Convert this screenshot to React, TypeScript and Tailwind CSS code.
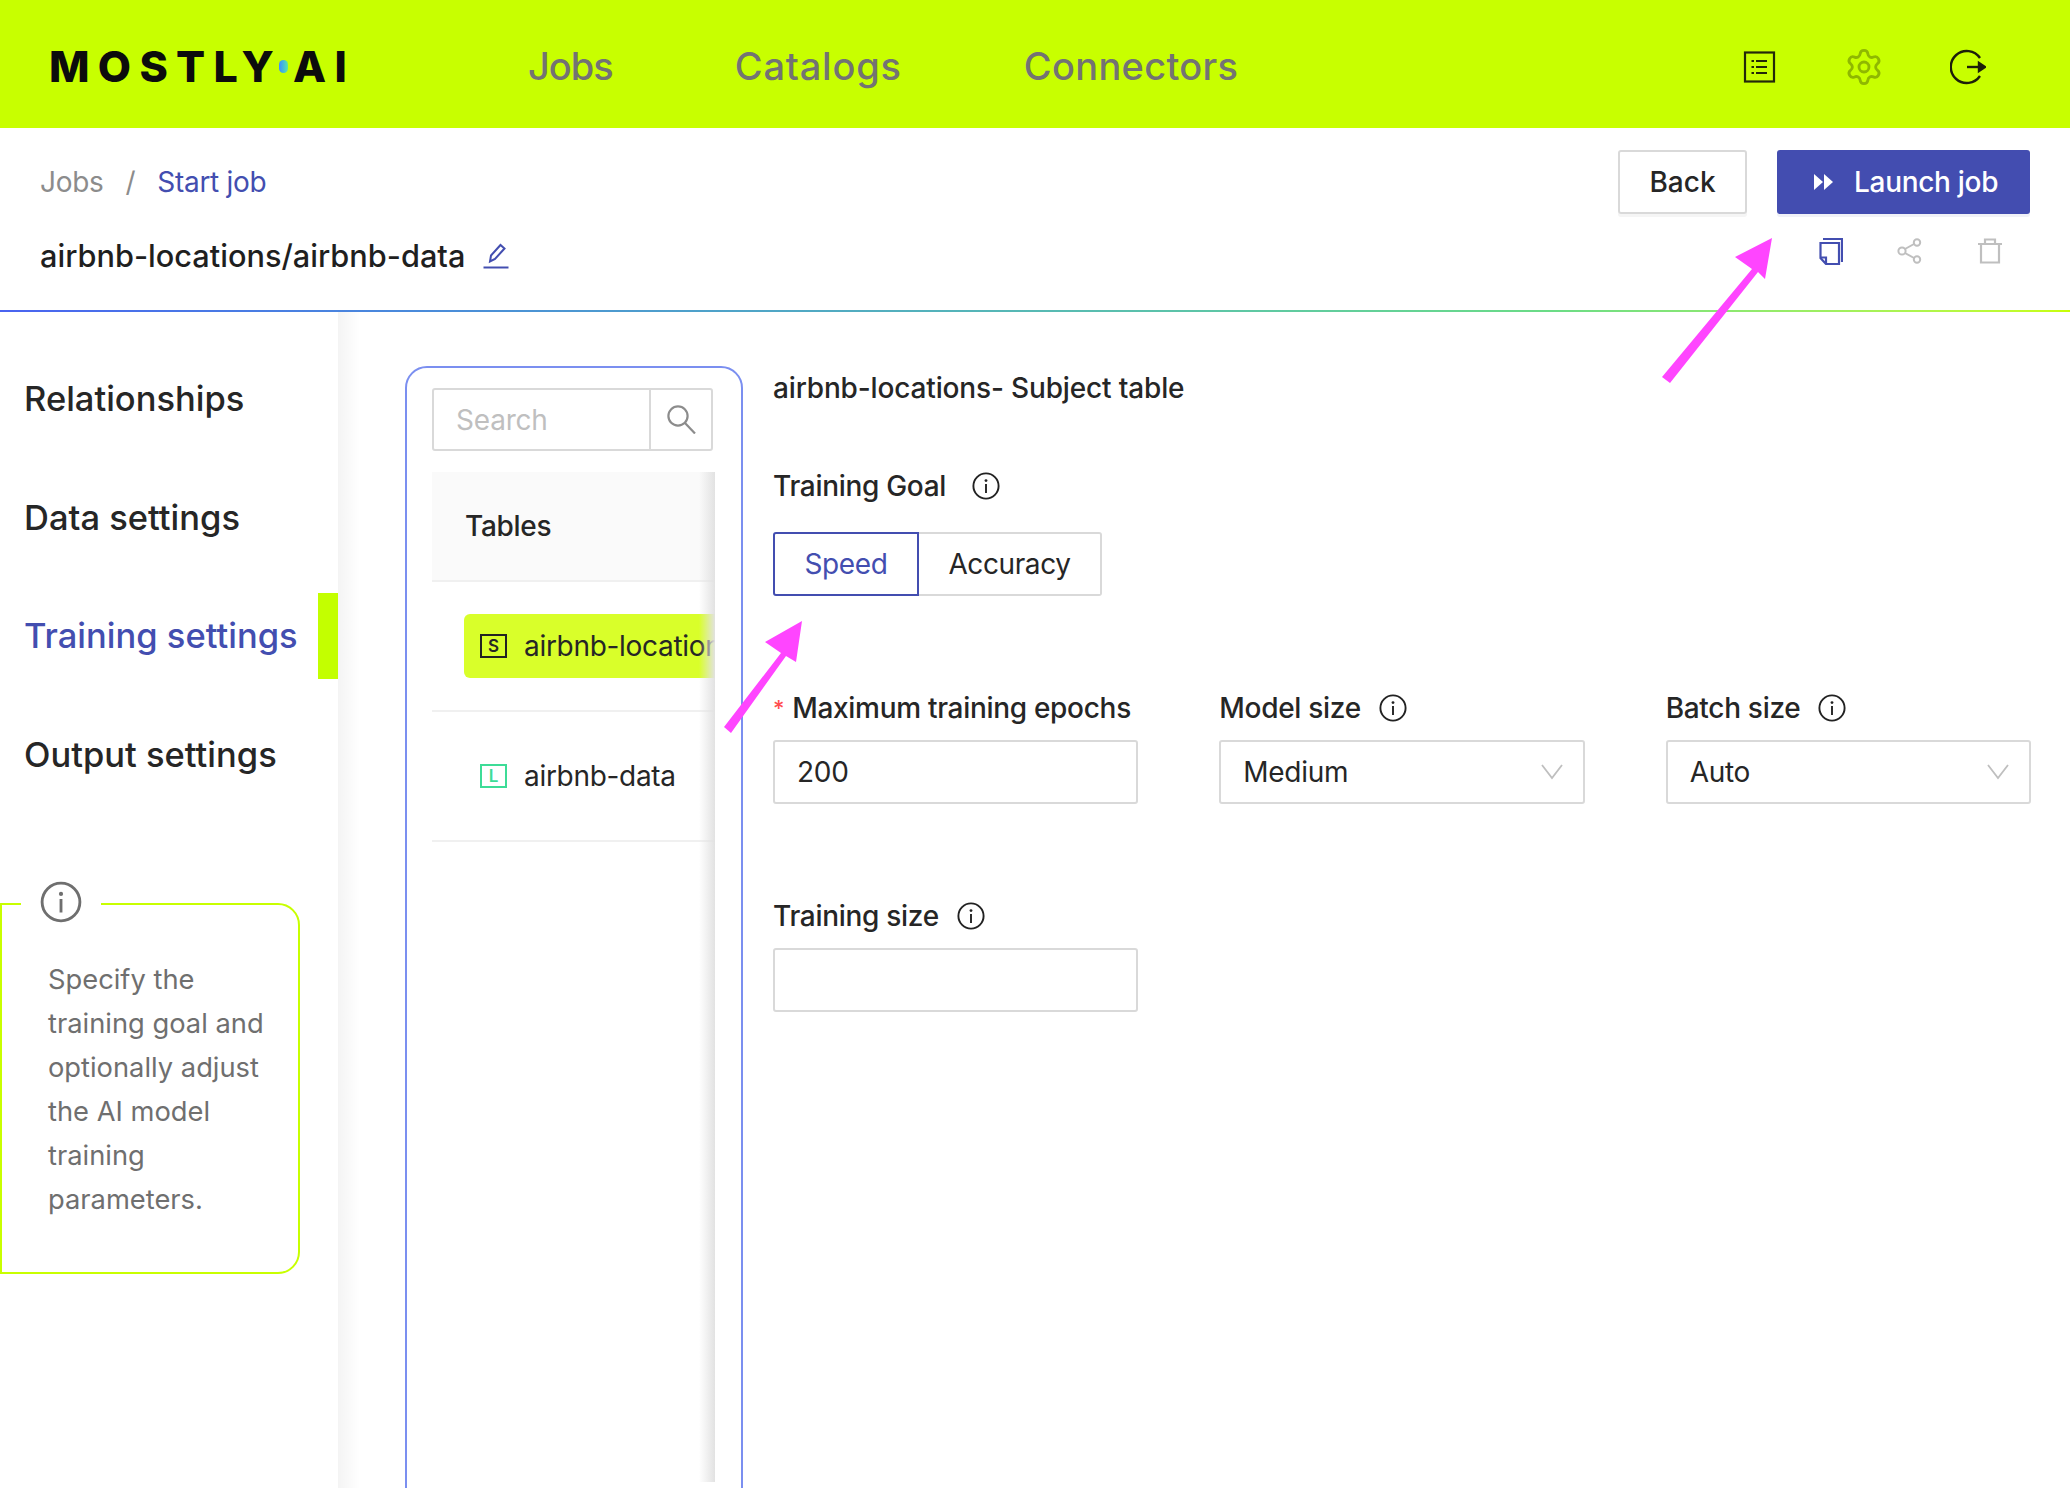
import React from "react";
import { Settings } from "lucide-react";

const font = "font-['Inter',sans-serif]";

const InfoIcon = ({ size = 28, color = "#222" }: { size?: number; color?: string }) => (
  <svg width={size} height={size} viewBox="0 0 28 28" fill="none">
    <circle cx="14" cy="14" r="12.6" stroke={color} strokeWidth="1.9" />
    <circle cx="14" cy="8.6" r="1.4" fill={color} />
    <path d="M14 12v9" stroke={color} strokeWidth="1.9" />
  </svg>
);

const Field = ({ label, required, info, children }: { label: string; required?: boolean; info?: boolean; children?: React.ReactNode }) => (
  <div className="flex flex-col gap-[10px]">
    <div className="flex h-[44px] items-center text-[28px] font-medium tracking-[-0.3px] text-[#262626]">
      {required && <span className="mr-[8px] text-[22px] text-[#ff4d4f]">*</span>}
      <span>{label}</span>
      {info && (
        <span className="ml-[18px]">
          <InfoIcon />
        </span>
      )}
    </div>
    {children}
  </div>
);

const Select = ({ value }: { value: string }) => (
  <div className="flex h-[64px] items-center justify-between rounded-[3px] border-2 border-[#d9d9d9] pl-[22px] pr-[20px] text-[28px] tracking-[-0.3px] text-[#262626]">
    <span>{value}</span>
    <svg width="22" height="16" viewBox="0 0 22 16" fill="none" stroke="#bfbfbf" strokeWidth="1.8">
      <path d="M1 1l10 13L21 1" />
    </svg>
  </div>
);

const navItems = [
  { name: "Jobs", cls: "tracking-[-1px]" },
  { name: "Catalogs", cls: "tracking-[0.8px]" },
  { name: "Connectors", cls: "tracking-[0.3px]" },
];

const sideItems = [
  { name: "Relationships" },
  { name: "Data settings" },
  { name: "Training settings", active: true },
  { name: "Output settings" },
];

export default function App() {
  return (
    <div className={`relative h-[1488px] w-[2070px] overflow-hidden bg-white ${font}`}>
      {/* top bar */}
      <header className="flex h-[128px] items-center bg-[#c8ff00] pl-[49px] pr-[84px] pt-[5px]">
        <div className="flex w-[479px] items-center text-[43px] font-extrabold leading-none tracking-[8.3px] text-[#0c0c0c]">
          <span>MOSTLY</span>
          <span className="ml-[-3px] mr-[5px] h-[13px] w-[9px] rounded-full bg-linear-to-r from-[#3f8cff] to-[#5fe3a0]" />
          <span>AI</span>
        </div>
        <nav className="flex gap-[122px] text-[38px] font-medium text-[#737373]">
          {navItems.map((n) => (
            <span key={n.name} className={n.cls}>
              {n.name}
            </span>
          ))}
        </nav>
        <div className="ml-auto flex items-center">
          <svg width="33" height="32" viewBox="0 0 32 32" fill="none" stroke="#23290a" strokeWidth="2.2">
            <rect x="1.5" y="1.5" width="29" height="29" />
            <path d="M12.5 10h11M12.5 16h11M12.5 22h11" />
            <path d="M8 10h2.5M8 16h2.5M8 22h2.5" />
          </svg>
          <Settings size={40} strokeWidth={1.7} color="#8fb800" className="ml-[68px]" />
          <svg className="ml-[66px]" width="36" height="36" viewBox="0 0 36 36" fill="none" stroke="#1d1f0a" strokeWidth="2.4">
            <path d="M30 9A16 16 0 1 0 30 27" />
            <path d="M17 18h16" />
            <path d="M29 14l6 4-6 4z" fill="#1d1f0a" />
          </svg>
        </div>
      </header>

      {/* breadcrumb and job title */}
      <section className="flex h-[182px] justify-between pl-[40px] pr-[40px]">
        <div>
          <div className="mt-[27px] flex h-[54px] items-center text-[28px] tracking-[-0.3px] text-[#8c8c8c]">
            <span>Jobs</span>
            <span className="mx-[22px]">/</span>
            <span className="text-[#434eb0]">Start job</span>
          </div>
          <div className="mt-[24px] flex items-center text-[30.7px] font-medium text-[#1f1f1f]">
            <span>airbnb-locations/airbnb-data</span>
            <svg className="ml-[18px]" width="26" height="26" viewBox="0 0 26 26" fill="none" stroke="#434eb0" strokeWidth="2">
              <path d="M7 18.5l1-6L17.5 2l4 3.5L12 16z" />
              <path d="M0.5 24.5h25" />
            </svg>
          </div>
        </div>
        <div className="flex flex-col items-end pt-[22px]">
          <div className="flex gap-[30px]">
            <button className="h-[64px] w-[129px] rounded-[3px] border-2 border-[#d9d9d9] text-[28px] font-medium text-[#262626] shadow-[0_3px_0_#f5f5f5]">
              Back
            </button>
            <button className="flex h-[64px] w-[253px] items-center rounded-[3px] bg-[#434db0] pl-[37px] text-[28px] font-medium tracking-[-0.3px] text-white shadow-[0_3px_0_#f0f1f8]">
              <svg width="19" height="16" viewBox="0 0 19 16" fill="white">
                <path d="M0 0l9 8-9 8zM10 0l9 8-9 8z" />
              </svg>
              <span className="ml-[21px]">Launch job</span>
            </button>
          </div>
          <div className="mt-[23px] flex items-center gap-[54px] pr-[27px]">
            <svg width="24" height="28" viewBox="0 0 24 28" fill="none" stroke="#434eb0" strokeWidth="2.2">
              <path d="M4 2h19v23" />
              <path d="M1.5 6H20v21H7l-5.5-6z" fill="white" />
              <path d="M1.5 20.5H7V27" />
            </svg>
            <svg width="26" height="26" viewBox="0 0 26 26" fill="none" stroke="#bfbfbf" strokeWidth="2">
              <circle cx="5" cy="13" r="3.6" />
              <circle cx="20" cy="4.5" r="3.2" />
              <circle cx="20" cy="21.5" r="3.2" />
              <path d="M8 11l9-5M8 15l9 5" />
            </svg>
            <svg width="26" height="26" viewBox="0 0 26 26" fill="none" stroke="#bfbfbf" strokeWidth="2.2">
              <path d="M1 6h24M8 6V1.5h10V6" />
              <path d="M4 6v18.5h18V6" />
            </svg>
          </div>
        </div>
      </section>

      <div className="h-[2px] bg-linear-to-r from-[#4a63f0] via-[#6bdc86] via-75% to-[#c8ff00]" />

      <main className="flex h-[1176px]">
        {/* left side menu */}
        <aside className="w-[338px] shrink-0 pt-[28px]">
          {sideItems.map((s) => (
            <div key={s.name} className="flex h-[118.5px] items-center pl-[24px]">
              <span className={`text-[34.5px] font-medium ${s.active ? "text-[#434eb0]" : "text-[#262626]"}`}>{s.name}</span>
              {s.active && <span className="ml-auto h-[86px] w-[20px] bg-[#c3ff00]" />}
            </div>
          ))}
          <div className="relative mt-[89px] h-[371px] w-[300px] rounded-r-[22px] border-2 border-[#c8ff00] pl-[46px] pr-[10px] pt-[53px] text-[27.3px] leading-[44px] text-[#6f6f6f]">
            <span className="absolute left-[19px] top-[-24px] flex w-[80px] justify-center bg-white">
              <InfoIcon size={42} color="#6f6f6f" />
            </span>
            Specify the training goal and optionally adjust the AI model training parameters.
          </div>
        </aside>
        <div className="h-full w-[22px] shrink-0 bg-linear-to-r from-[#f4f4f4] to-white" />

        {/* table list */}
        <div className="ml-[45px] mt-[54px] h-[1140px] w-[338px] shrink-0 rounded-t-[22px] border-2 border-[#7b8ff0] pl-[25px] pt-[20px]">
          <div className="flex h-[63px] w-[281px] rounded-[3px] border-2 border-[#d9d9d9]">
            <span className="flex flex-1 items-center pl-[22px] text-[28px] tracking-[-0.2px] text-[#bfbfbf]">Search</span>
            <span className="flex w-[62px] items-center justify-center border-l-2 border-[#d9d9d9]">
              <svg width="29" height="29" viewBox="0 0 29 29" fill="none" stroke="#8c8c8c" strokeWidth="2.2">
                <circle cx="11" cy="11" r="9.6" />
                <path d="M18 18l10 10.5" />
              </svg>
            </span>
          </div>
          <div className="relative mt-[21px] h-[1010px] w-[283px] overflow-hidden text-[28px] tracking-[-0.3px] text-[#262626]">
            <div className="flex h-[110px] items-center border-b-2 border-[#f0f0f0] bg-[#fafafa] pl-[33px] font-medium">
              Tables
            </div>
            <div className="flex h-[130px] items-center border-b-2 border-[#f0f0f0] pl-[32px]">
              <div className="flex h-[64px] w-[260px] shrink-0 items-center overflow-hidden whitespace-nowrap rounded-l-[6px] bg-[#d9ff2a] pl-[16px]">
                <span className="mr-[17px] flex h-[24px] w-[27px] shrink-0 items-center justify-center border-2 border-[#222] text-[17px] font-semibold leading-none">S</span>
                airbnb-locations
              </div>
            </div>
            <div className="flex h-[130px] items-center border-b-2 border-[#f0f0f0] pl-[48px]">
              <span className="mr-[17px] flex h-[24px] w-[27px] shrink-0 items-center justify-center border-2 border-[#3ddc97] text-[17px] font-semibold leading-none text-[#3ddc97]">L</span>
              airbnb-data
            </div>
            <div className="absolute inset-y-0 right-0 w-[16px] bg-linear-to-r from-transparent to-[#e2e2e2]" />
          </div>
        </div>

        {/* training settings form */}
        <div className="ml-[30px] mt-[54px] w-[1258px] shrink-0">
          <div className="flex h-[44px] items-center text-[28px] font-medium tracking-[-0.15px] text-[#262626]">
            airbnb-locations- Subject table
          </div>
          <div className="mt-[54px] flex h-[44px] items-center text-[28px] font-medium tracking-[-0.3px] text-[#262626]">
            <span>Training Goal</span>
            <span className="ml-[26px]">
              <InfoIcon />
            </span>
          </div>
          <div className="mt-[24px] flex h-[64px] text-[28px] tracking-[-0.4px]">
            <div className="flex w-[146px] items-center justify-center rounded-l-[3px] border-2 border-[#434eb0] text-[#434eb0]">Speed</div>
            <div className="flex w-[183px] items-center justify-center rounded-r-[3px] border-2 border-l-0 border-[#d9d9d9] text-[#262626]">Accuracy</div>
          </div>
          <div className="mt-[90px] grid grid-cols-3 gap-x-[81px]">
            <Field label="Maximum training epochs" required>
              <div className="flex h-[64px] items-center rounded-[3px] border-2 border-[#d9d9d9] pl-[22px] text-[28px] tracking-[-0.3px] text-[#262626]">200</div>
            </Field>
            <Field label="Model size" info>
              <Select value="Medium" />
            </Field>
            <Field label="Batch size" info>
              <Select value="Auto" />
            </Field>
          </div>
          <div className="mt-[90px] grid grid-cols-3 gap-x-[81px]">
            <Field label="Training size" info>
              <div className="h-[64px] rounded-[3px] border-2 border-[#d9d9d9]" />
            </Field>
          </div>
        </div>
      </main>

      {/* annotation arrows drawn over the page */}
      <svg className="pointer-events-none absolute left-0 top-0" width="2070" height="1488" fill="#ff45ff">
        <path d="M1772 238L1735 257L1752 269L1662 377L1670 383L1758 272L1765 279Z" />
        <path d="M802 621L765 642L781 653L724 727L731 733L786 656L796 662Z" />
      </svg>
    </div>
  );
}
